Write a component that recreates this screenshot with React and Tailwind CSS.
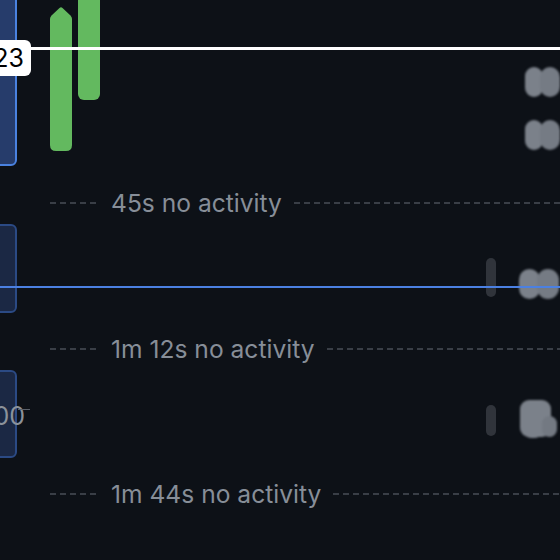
const dash = "bg-[repeating-linear-gradient(90deg,#393e46_0px,#393e46_6px,transparent_6px,transparent_10px)]";

function Gap({ label }) {
  return (
    <div className="flex h-[57px] flex-col pt-[24px]">
      <div className="flex h-[24px] items-center pl-[50px]">
        <div className={`h-[2px] w-[47px] shrink-0 ${dash}`} />
        <span className="ml-[14px] whitespace-nowrap text-[24.6px] leading-[24px] text-[#878e98]">{label}</span>
        <div className={`ml-[12px] h-[2px] flex-1 ${dash}`} />
      </div>
    </div>
  );
}

// two blurred avatars side by side
function Pair({ wide }) {
  return (
    <div className="flex blur-[1px]">
      <div className="h-[30px] w-[21px] rounded-[11px] bg-[#7b818a]" />
      <div className={`-ml-[3px] h-[30px] rounded-[11px] bg-[#757b84] ${wide ? "w-[24px]" : "w-[22px]"}`} />
    </div>
  );
}

function Cluster() {
  return (
    <div className="relative h-[38px] w-[37px] blur-[1px]">
      <div className="absolute left-0 top-0 h-[37px] w-[31px] rounded-[9px] bg-[#7b818a]" />
      <div className="absolute left-[22px] top-[16px] h-[21px] w-[15px] rounded-full bg-[#737982]" />
      <div className="absolute left-[4px] top-[24px] h-[14px] w-[18px] rounded-full bg-[#7b818a]" />
    </div>
  );
}

export default function App() {
  return (
    <div className="relative h-[560px] w-[560px] overflow-hidden bg-[#0d1117] font-['Inter',sans-serif]">
      <div className="flex flex-col">
        {/* session 1 */}
        <div className="flex h-[167px] items-start">
          <div className="-ml-[12px] -mt-[10px] h-[176px] w-[29px] shrink-0 rounded-md border-2 border-[#4a82e0] bg-[#263c6b]" />
          <div className="ml-[33px] flex items-start gap-[6px]">
            <svg width="22" height="144" viewBox="0 0 22 144" className="mt-[7px]">
              <path d="M0 12 Q0 10 1.5 8.5 L9.5 1 Q11 -0.3 12.5 1 L20.5 8.5 Q22 10 22 12 V138 Q22 144 16 144 H6 Q0 144 0 138 Z" fill="#63b95f" />
            </svg>
            <div className="-mt-[10px] h-[110px] w-[22px] rounded-b-[6px] bg-[#63b95f]" />
          </div>
          <div className="ml-auto flex w-[35px] flex-col">
            <div className="mt-[67px]"><Pair wide /></div>
            <div className="mt-[23px]"><Pair wide /></div>
          </div>
        </div>

        <Gap label="45s no activity" />

        {/* session 2 */}
        <div className="flex h-[89px] items-start">
          <div className="-ml-[12px] h-[89px] w-[29px] shrink-0 rounded-md border-2 border-[#2b4a84] bg-[#1b2844]" />
          <div className="ml-auto flex w-[74px] items-start">
            <div className="mt-[34px] h-[39px] w-[10px] rounded-full bg-[#30343b]" />
            <div className="ml-[23px] mt-[45px]"><Pair /></div>
          </div>
        </div>

        <Gap label="1m 12s no activity" />

        {/* session 3 */}
        <div className="flex h-[88px] items-start">
          <div className="-ml-[12px] h-[88px] w-[29px] shrink-0 rounded-md border-2 border-[#2b4a84] bg-[#1b2844]" />
          <div className="ml-auto flex w-[74px] items-start">
            <div className="mt-[35px] h-[31px] w-[10px] rounded-full bg-[#30343b]" />
            <div className="ml-[24px] mt-[30px]"><Cluster /></div>
          </div>
        </div>

        <Gap label="1m 44s no activity" />
      </div>

      {/* playhead */}
      <div className="absolute left-0 right-0 top-[47px] h-[3px] bg-white" />
      <div className="absolute left-[-20px] top-[40px] h-[36px] w-[51px] rounded-md bg-white pr-[7px] text-right text-[25px] leading-[36px] text-black">23</div>

      {/* hover line */}
      <div className="absolute left-0 right-0 top-[286px] h-[2px] bg-[#4b80e2]" />

      {/* tick label */}
      <div className="absolute left-[-20px] top-[403px] w-[45px] text-right text-[25px] leading-[26px] text-[#8b929b]">00</div>
      <div className="absolute left-[18px] top-[409px] h-px w-[12px] bg-[#5b616a]" />
    </div>
  );
}
